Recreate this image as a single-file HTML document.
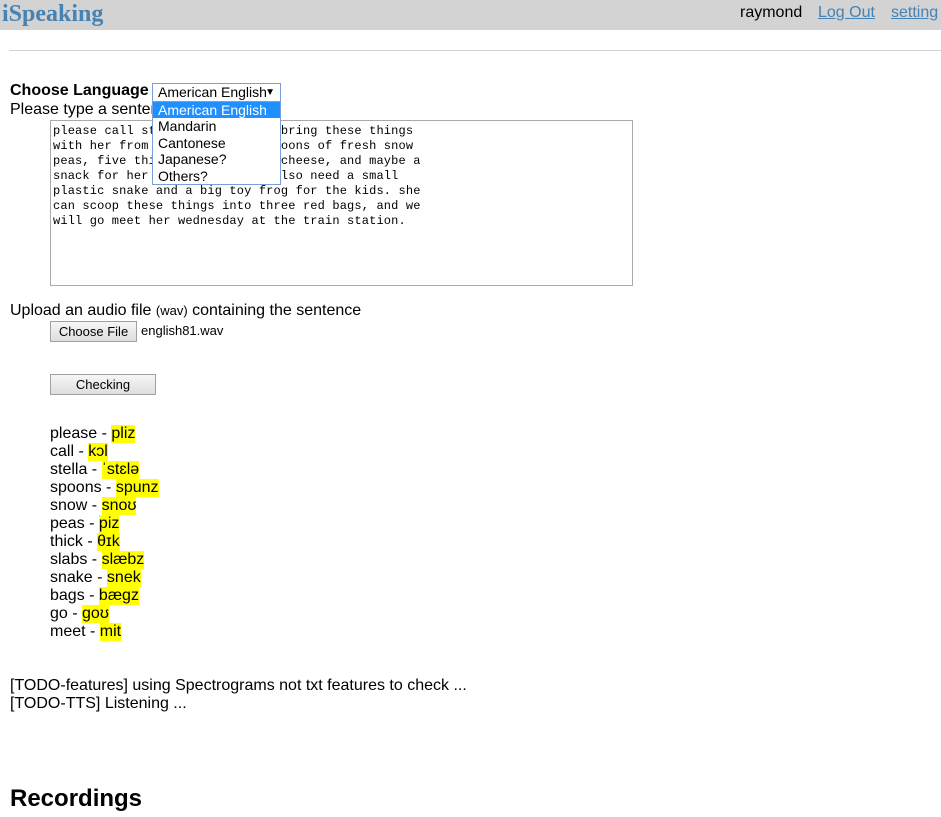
<!DOCTYPE html>
<html><head><meta charset="utf-8"><style>
body{margin:0;width:941px;height:817px;position:relative;font-family:"Liberation Sans",Arial,sans-serif;font-size:16px;color:#000;background:#fff;overflow:hidden}
.a{position:absolute;white-space:nowrap}
.hl{background:#ff0;display:inline-block;line-height:18px;height:18px}
</style></head><body>
<div class="a" style="left:0;top:0;width:941px;height:30px;background:#d3d3d3"></div>
<div class="a" style="left:2px;top:0;font-family:'Liberation Serif',serif;font-weight:bold;font-size:24px;line-height:28px;color:#4682b4">iSpeaking</div>
<div class="a" style="left:740px;top:4px;line-height:18px">raymond</div>
<div class="a" style="left:818px;top:4px;line-height:18px;color:#4682b4;text-decoration:underline">Log Out</div>
<div class="a" style="left:891px;top:4px;line-height:18px;color:#4682b4;text-decoration:underline">setting</div>
<div class="a" style="left:9px;top:50px;width:932px;height:1px;background:#d3d3d3"></div>

<div class="a" style="left:10px;top:82px;line-height:18px;font-weight:bold">Choose Language</div>
<div class="a" style="left:10px;top:101px;line-height:18px">Please type a sentence</div>
<div class="a" style="left:50px;top:120px;width:581px;height:164px;border:1px solid #a9a9a9;background:#fff"></div>
<div class="a" style="left:53px;top:124px;font-family:'Liberation Mono',monospace;font-size:12px;line-height:15px;letter-spacing:0.15px;white-space:pre">please call stella. ask her to bring these things
with her from the store: six spoons of fresh snow
peas, five thick slabs of blue cheese, and maybe a
snack for her brother bob. we also need a small
plastic snake and a big toy frog for the kids. she
can scoop these things into three red bags, and we
will go meet her wednesday at the train station.</div>
<div class="a" style="left:152px;top:83px;width:127px;height:17px;border:1px solid #7a9fd8;background:#fff;font-size:14px;line-height:17px"><span style="padding-left:5px">American English</span><span style="position:absolute;right:5px;font-size:10px">▼</span></div>
<div class="a" style="left:152px;top:101px;width:127px;height:82px;border:1px solid #7a9fd8;background:#fff;font-size:14px;line-height:16.4px">
<div style="background:#1e90ff;color:#fff;padding-left:5px">American English</div>
<div style="padding-left:5px">Mandarin</div>
<div style="padding-left:5px">Cantonese</div>
<div style="padding-left:5px">Japanese?</div>
<div style="padding-left:5px">Others?</div>
</div>

<div class="a" style="left:10px;top:302px;line-height:18px">Upload an audio file <span style="font-size:13px">(wav)</span> containing the sentence</div>
<div class="a" style="left:50px;top:321px;width:85px;height:19px;border:1px solid #a0a0a0;background:linear-gradient(#f6f6f6,#dedede);font-size:13px;line-height:19px;text-align:center">Choose File</div>
<div class="a" style="left:141px;top:322px;font-size:13px;line-height:18px">english81.wav</div>
<div class="a" style="left:50px;top:374px;width:104px;height:19px;border:1px solid #a0a0a0;background:linear-gradient(#f6f6f6,#dedede);font-size:13px;line-height:19px;text-align:center">Checking</div>

<div class="a" style="left:50px;top:425px;line-height:18px">
please - <span class="hl">pliz</span><br>
call - <span class="hl">kɔl</span><br>
stella - <span class="hl">ˈstɛlə</span><br>
spoons - <span class="hl">spunz</span><br>
snow - <span class="hl">snoʊ</span><br>
peas - <span class="hl">piz</span><br>
thick - <span class="hl">θɪk</span><br>
slabs - <span class="hl">slæbz</span><br>
snake - <span class="hl">snek</span><br>
bags - <span class="hl">bægz</span><br>
go - <span class="hl">goʊ</span><br>
meet - <span class="hl">mit</span>
</div>

<div class="a" style="left:10px;top:677px;line-height:18px">[TODO-features] using Spectrograms not txt features to check ...<br>[TODO-TTS] Listening ...</div>
<div class="a" style="left:10px;top:785px;font-size:24px;font-weight:bold;line-height:28px">Recordings</div>
</body></html>
